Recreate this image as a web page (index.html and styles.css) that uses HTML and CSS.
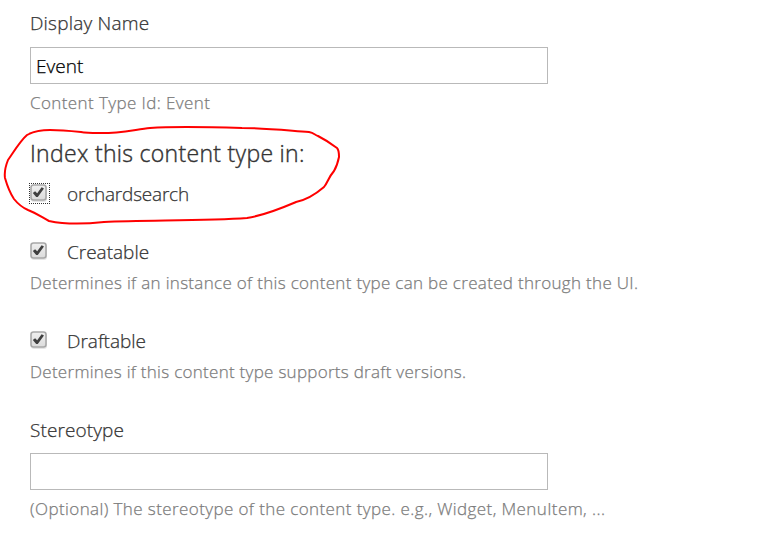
FILE: index.html
```html
<!DOCTYPE html>
<html lang="en">
<head>
<meta charset="utf-8">
<title>Edit Content Type</title>
<link rel="stylesheet" href="styles.css">
</head>
<body>
<svg class="defs" width="0" height="0" aria-hidden="true">
  <defs>
    <linearGradient id="face" x1="0" y1="0" x2="0" y2="1"><stop offset="0" stop-color="#efefef"/><stop offset="1" stop-color="#dcdcdc"/></linearGradient>
    <symbol id="checkbox" viewBox="0 0 18 19">
      <rect x="1" y="2" width="16" height="16" rx="3" fill="#000" opacity=".1"/>
      <rect x="1" y="1" width="15" height="15" rx="2.5" fill="url(#face)" stroke="#a8a8a8" stroke-width="1.6"/>
      <path d="M2.8 9 5.1 7.2 7.2 9.2 11.6 3.3 14 4.6 7.8 13 6.2 13Z" fill="#404040"/>
    </symbol>
  </defs>
</svg>
<form class="editor">
  <div class="field">
    <label class="label name" for="name">Display Name</label>
    <input class="text" id="name" type="text" value="Event">
    <p class="hint id">Content Type Id: Event</p>
  </div>
  <fieldset class="indexes">
    <h2 class="heading">Index this content type in:</h2>
    <div class="check"><span class="box focused"><svg><use href="#checkbox"/></svg></span><span class="label search">orchardsearch</span></div>
    <svg class="marker" width="345" height="110" viewBox="0 120 345 110" aria-hidden="true">
      <path d="M81 132 C71 131 60 130 50 130 C41 130 32 132 27 135 C20 141 13 153 8 160 C6 165 4 171 5 178 C7 185 10 193 14 199 C18 204 21 207 28 210 C36 213 43 218 49 221 C63 224 86 224 104 222 C145 220 205 221 247 218 C266 215 282 208 296 202 C306 200 317 193 324 187 C328 182 328 178 334 171 C337 166 338 162 339 157 C339 153 339 150 337 148 C329 142 322 138 318 136 C315 135 314 133 309 132 C282 130 262 128 242 128 C211 127 176 126 150 128 C133 130 114 134 98 133 C91 133 87 133 81 132Z"/>
    </svg>
  </fieldset>
  <div class="field option">
    <div class="check"><span class="box"><svg><use href="#checkbox"/></svg></span><span class="label creatable">Creatable</span></div>
    <p class="hint creation">Determines if an instance of this content type can be created through the UI.</p>
  </div>
  <div class="field option">
    <div class="check"><span class="box"><svg><use href="#checkbox"/></svg></span><span class="label draftable">Draftable</span></div>
    <p class="hint draft">Determines if this content type supports draft versions.</p>
  </div>
  <div class="field stereotype">
    <label class="label stereo" for="stereotype">Stereotype</label>
    <input class="text" id="stereotype" type="text">
    <p class="hint optional">(Optional) The stereotype of the content type. e.g., Widget, MenuItem, ...</p>
  </div>
</form>
</body>
</html>
```
FILE: styles.css
```css
* { box-sizing: border-box; }
body { margin: 0; background: #fff; color: #333; font-family: "Open Sans", "Noto Sans", sans-serif; font-weight: 300; -webkit-text-stroke: 0.25px; }
.defs { position: absolute; }
.editor { padding: 9px 30px 0; }
.field, .indexes { display: flex; flex-direction: column; align-items: flex-start; }
.label { font-size: 19px; line-height: 28px; white-space: nowrap; }
.name { letter-spacing: 0.2px; }
.search { letter-spacing: -0.2px; }
.stereo { letter-spacing: 0.1px; }
.text { width: 518px; height: 37px; margin: 10px 0 5px; padding: 0 5px; border: 1px solid #b9b9b9; border-radius: 0; background: #fff; color: #000; font: inherit; font-size: 19px; outline: none; }
.stereotype .text { margin-top: 9px; }
.hint { margin: 0; color: #7c7c7c; font-size: 17px; line-height: 27px; letter-spacing: 0.31px; white-space: nowrap; }
.id, .optional { letter-spacing: 0.4px; }
.draft { letter-spacing: 0.28px; }
.indexes { position: relative; margin: 20px 0 0; padding: 0; border: 0; }
.heading { margin: 0 0 10px; font-size: 23px; font-weight: 300; line-height: 34px; letter-spacing: 0.3px; white-space: nowrap; -webkit-text-stroke: 0.4px; }
.check { display: flex; align-items: flex-start; height: 28px; }
.box { display: block; width: 21px; height: 21px; margin: 3px 17px 0 -1px; padding: 1px 0 0 1px; }
.box svg { display: block; width: 18px; height: 19px; }
.focused { outline: 1px dotted #333; outline-offset: -1px; }
.option { margin-top: 30px; }
.option .hint { margin-top: 3px; }
.option + .option, .stereotype { margin-top: 31px; }
.marker { position: absolute; left: -30px; top: -16px; pointer-events: none; }
.marker path { fill: none; stroke: #f00; stroke-width: 2; stroke-linejoin: round; }
```
